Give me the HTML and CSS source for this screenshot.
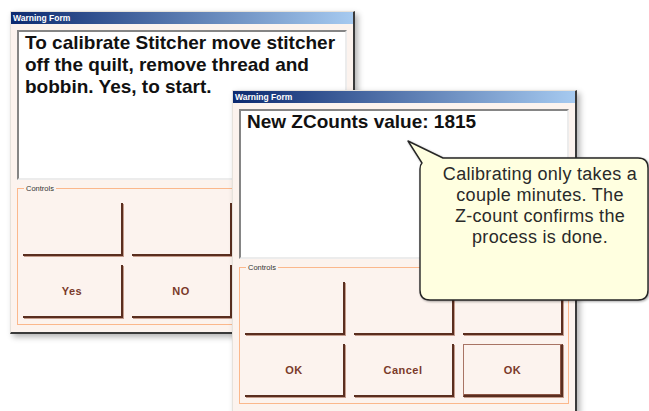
FILE: index.html
```html
<!DOCTYPE html>
<html lang="en">
<head>
  <meta charset="UTF-8" />
  <title>Warning Form</title>
  <link rel="stylesheet" href="styles.css">
</head>
<body>

  <div class="window win-calibrate">
    <div class="titlebar">Warning Form</div>
    <div class="win-body">
      <div class="message">To calibrate Stitcher move stitcher off the quilt, remove thread and bobbin. Yes, to start.</div>
      <div class="group">
        <span class="group-label">Controls</span>
        <div class="buttons">
          <button class="btn"></button>
          <button class="btn"></button>
          <button class="btn"></button>
          <button class="btn">Yes</button>
          <button class="btn">NO</button>
          <button class="btn"></button>
        </div>
      </div>
    </div>
  </div>

  <div class="window win-zcount">
    <div class="titlebar">Warning Form</div>
    <div class="win-body">
      <div class="message">New ZCounts value: 1815</div>
      <div class="group">
        <span class="group-label">Controls</span>
        <div class="buttons">
          <button class="btn"></button>
          <button class="btn"></button>
          <button class="btn"></button>
          <button class="btn">OK</button>
          <button class="btn">Cancel</button>
          <button class="btn btn-default">OK</button>
        </div>
      </div>
    </div>
  </div>

  <div class="callout">
    <svg width="244" height="166" viewBox="0 0 244 166">
      <path d="M3,3 L38,20 L233,20 Q243,20 243,30 L243,152 Q243,162 233,162 L25,162 Q15,162 15,152 L15,31 Q15,27 17,25 Z"
            fill="#ffffe0" stroke="#262626" stroke-width="1.4" stroke-linejoin="round"/>
    </svg>
    <div class="callout-text">Calibrating only takes a<br>couple minutes. The<br>Z-count confirms the<br>process is done.</div>
  </div>

</body>
</html>
```

FILE: styles.css
```css
* {
  box-sizing: border-box;
}

body {
  margin: 0;
  width: 649px;
  height: 411px;
  overflow: hidden;
  position: relative;
  background: #fff;
  font-family: 'Liberation Sans', Arial, sans-serif;
}

/* desktop windows */
.window {
  position: absolute;
  width: 345px;
  background: #fcf3ee;
  border-left: 1px solid #e6e2dc;
  border-top: 1px solid #e6e2dc;
  border-right: 2px solid #3a3a3a;
  border-bottom: 2px solid #3a3a3a;
  box-shadow: 3px 3px 6px rgba(0,0,0,0.3);
}

.win-calibrate {
  left: 10px;
  top: 11px;
}

.win-zcount {
  left: 232px;
  top: 90px;
}

.titlebar {
  height: 12px;
  padding-left: 2px;
  background: linear-gradient(to right, #0c2a70, #a6caf0);
  color: #fff;
  font-size: 8.5px;
  font-weight: bold;
  line-height: 12px;
}

.win-body {
  padding: 6px 6px 7px;
}

.message {
  height: 150px;
  padding: 0 6px;
  background: #fff;
  border: 2px solid;
  border-color: #858585 #ececec #ececec #858585;
  color: #111;
  font-size: 19px;
  font-weight: bold;
  line-height: 22px;
}

/* group box */
.group {
  position: relative;
  margin-top: 8px;
  padding: 14px 5px 6px;
  border: 1px solid #fbb88c;
}

.group-label {
  position: absolute;
  top: -5px;
  left: 6px;
  padding: 0 2px;
  background: #fcf3ee;
  color: #333;
  font-size: 7.5px;
  line-height: 9px;
}

.buttons {
  display: grid;
  grid-template-columns: repeat(3, 100px);
  grid-auto-rows: 53px;
  gap: 9px;
}

.btn {
  appearance: none;
  margin: 0;
  padding: 0;
  background: #fcf3ee;
  border: 0;
  border-right: 2px solid #5a2e1f;
  border-bottom: 2px solid #5a2e1f;
  box-shadow: 1px 1px 0 #c49c8c;
  color: #7a3a2a;
  font-family: 'Liberation Sans', Arial, sans-serif;
  font-size: 11px;
  font-weight: bold;
  letter-spacing: 0.5px;
}

.btn-default {
  border: 1px solid #a87464;
  border-right: 2px solid #5a2e1f;
  border-bottom: 2px solid #5a2e1f;
  box-shadow: 1px 1px 0 #c49c8c, inset -1px -1px 0 #8a5444;
}

/* note balloon */
.callout {
  position: absolute;
  left: 405px;
  top: 138px;
  width: 244px;
  height: 166px;
}

.callout svg {
  position: absolute;
  left: 0;
  top: 0;
  filter: drop-shadow(1px 1px 1px rgba(0,0,0,0.35));
}

.callout-text {
  position: relative;
  margin-left: 30px;
  width: 210px;
  padding-top: 26px;
  color: #2a2a2a;
  font-size: 18px;
  letter-spacing: 0.3px;
  line-height: 21px;
  text-align: center;
}
```
